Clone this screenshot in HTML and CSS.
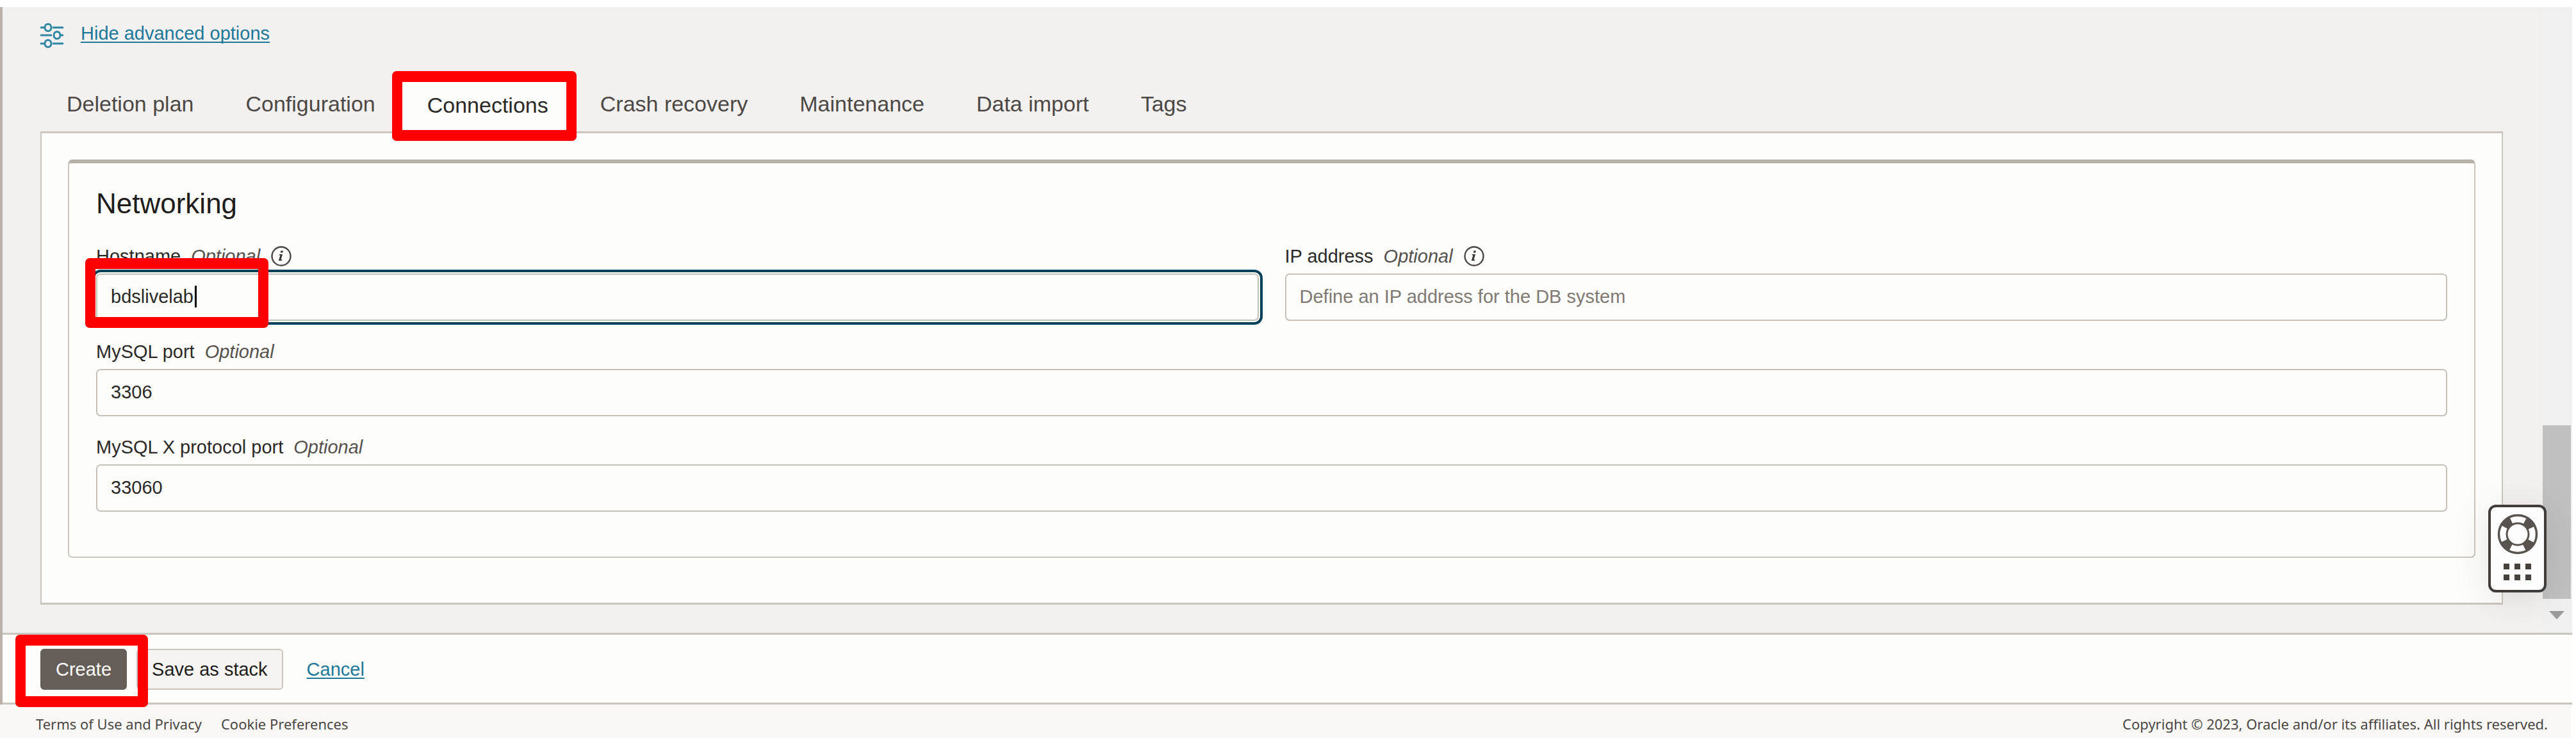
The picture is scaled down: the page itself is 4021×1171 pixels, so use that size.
FILE: index.html
```html
<!DOCTYPE html>
<html lang="en">
<head>
<meta charset="utf-8">
<title>Create DB system</title>
<link rel="stylesheet" href="styles.css">
</head>
<body>
<div class="frame">
  <main class="main">
    <div class="content">
      <div class="advanced">
        <svg class="sliders" viewBox="0 0 36 40" aria-hidden="true">
          <g fill="none" stroke="#2f86a3" stroke-width="3">
            <path d="M0 8H6M19 8H36M0 20H18M32 20H36M0 33H6M19 33H36"/>
            <ellipse cx="12" cy="8" rx="5" ry="5.5"/><ellipse cx="26" cy="20" rx="5" ry="5.5"/><ellipse cx="12" cy="33" rx="5" ry="5.5"/>
          </g>
        </svg>
        <a class="link" href="#">Hide advanced options</a>
      </div>
      <div class="tabs" role="tablist">
        <button class="tab" role="tab">Deletion plan</button>
        <button class="tab" role="tab">Configuration</button>
        <button class="tab tab-active" role="tab" aria-selected="true">Connections<span class="callout callout-tab"></span></button>
        <button class="tab" role="tab">Crash recovery</button>
        <button class="tab" role="tab">Maintenance</button>
        <button class="tab" role="tab">Data import</button>
        <button class="tab" role="tab">Tags</button>
      </div>
      <div class="panel" role="tabpanel">
        <section class="card">
          <h2 class="card-title">Networking</h2>
          <div class="fields">
            <div class="field">
              <div class="label-row">
                <label for="hostname">Hostname</label><em class="optional">Optional</em>
                <svg class="info" viewBox="0 0 32 32" aria-hidden="true"><circle cx="16" cy="16" r="14.5" fill="none" stroke="#4a4744" stroke-width="2.4"/><path fill="#333" d="M15.500 7.500h3.500l-.8 3h-3.500zM13 13h5l-2.500 8.500h2l-.4 1.500h-5.200l2.500-8.500h-1.800z"/></svg>
              </div>
              <div class="control">
                <input class="input input-focused" id="hostname" type="text" value="bdslivelab">
                <span class="caret"></span>
                <span class="callout callout-input"></span>
              </div>
            </div>
            <div class="field">
              <div class="label-row">
                <label for="ip">IP address</label><em class="optional">Optional</em>
                <svg class="info" viewBox="0 0 32 32" aria-hidden="true"><circle cx="16" cy="16" r="14.5" fill="none" stroke="#4a4744" stroke-width="2.4"/><path fill="#333" d="M15.500 7.500h3.500l-.8 3h-3.500zM13 13h5l-2.500 8.500h2l-.4 1.500h-5.200l2.500-8.500h-1.800z"/></svg>
              </div>
              <div class="control"><input class="input" id="ip" type="text" placeholder="Define an IP address for the DB system"></div>
            </div>
            <div class="field field-wide">
              <div class="label-row"><label for="port">MySQL port</label><em class="optional">Optional</em></div>
              <div class="control"><input class="input" id="port" type="text" value="3306"></div>
            </div>
            <div class="field field-wide">
              <div class="label-row"><label for="xport">MySQL X protocol port</label><em class="optional">Optional</em></div>
              <div class="control"><input class="input" id="xport" type="text" value="33060"></div>
            </div>
          </div>
        </section>
      </div>
    </div>
    <div class="scrollbar" aria-hidden="true">
      <div class="thumb"></div>
      <div class="arrow"></div>
    </div>
    <button class="help" aria-label="Help">
      <svg class="help-icon" viewBox="0 0 64 64" aria-hidden="true">
        <circle cx="32" cy="32" r="24" fill="none" stroke="#57534f" stroke-width="14" stroke-dasharray="15 22.700" stroke-dashoffset="-11.350"/>
        <circle cx="32" cy="32" r="29.500" fill="none" stroke="#57534f" stroke-width="3.500"/>
        <circle cx="32" cy="32" r="17" fill="none" stroke="#57534f" stroke-width="3"/>
      </svg>
      <svg class="help-dots" viewBox="0 0 43 26" aria-hidden="true"><path fill="#45413d" d="M0 0h9v9H0zM17 0h9v9h-9zM34 0h9v9h-9zM0 17h9v9H0zM17 17h9v9h-9zM34 17h9v9h-9z"/></svg>
    </button>
  </main>
  <div class="actions">
    <div class="create-wrap">
      <button class="btn btn-primary">Create</button>
      <span class="callout callout-create"></span>
    </div>
    <button class="btn">Save as stack</button>
    <a class="link cancel" href="#">Cancel</a>
  </div>
</div>
<footer class="footer">
  <nav class="footer-links">
    <a href="#">Terms of Use and Privacy</a>
    <a href="#">Cookie Preferences</a>
  </nav>
  <span>Copyright © 2023, Oracle and/or its affiliates. All rights reserved.</span>
</footer>
</body>
</html>
```
FILE: styles.css
```css
* { box-sizing: border-box; }
body {
  margin: 0;
  padding: 11px 6px 0 0;
  background: #fff;
  color: #2b2927;
  font: 29px/34px "Liberation Sans", Arial, sans-serif;
}
button, input { font: inherit; color: inherit; }

.frame { border-left: 4px solid #b9b1aa; background: #fdfdfb; }
.main { position: relative; display: flex; background: #f3f1f0; }
.content { flex: 1; padding: 24px 59px 44px; }

.link { color: #1d7899; text-decoration: underline; text-decoration-thickness: 2px; text-underline-offset: 3px; text-decoration-skip-ink: none; }
.advanced { display: flex; gap: 27px; height: 40px; }
.sliders { width: 36px; height: 40px; }

.tabs { display: flex; align-items: flex-start; margin-top: 44px; }
.tab {
  padding: 23px 40px 23px 41px;
  border: 0;
  background: none;
  color: #4c4845;
  font-size: 34px;
  line-height: 40px;
}
.tab-active {
  position: relative;
  z-index: 1;
  margin-bottom: -3px;
  padding-top: 25px;
  padding-bottom: 24px;
  background: #fdfdfb;
  color: #2b2927;
}

.panel { padding: 41px 41px 70px; border: solid #cbc5c0; border-width: 3px 2px; background: #fdfdfb; }
.card {
  padding: 38px 42px 70px;
  border: 2px solid #cbc5c0;
  border-top: 6px solid #b7b1a9;
  border-radius: 7px;
}
.card-title { margin: 0 0 40px; font-size: 44px; line-height: 50px; font-weight: 400; color: #1f1d1b; }
.fields { display: grid; grid-template-columns: 1fr 1fr; gap: 31px 41px; }
.field { display: flex; flex-direction: column; gap: 10px; }
.field-wide { grid-column: 1 / -1; }
.label-row { display: flex; align-items: center; height: 34px; }
.optional { margin-left: 16px; color: #55514e; }
.info { width: 32px; height: 32px; margin-left: 17px; }
.control { position: relative; display: flex; }
.input {
  width: 100%;
  height: 74px;
  padding: 0 21px 2px;
  border: 2px solid #c6c0bb;
  border-radius: 7px;
  outline: 0;
  background: #fdfdfb;
}
.input::placeholder { color: #807974; opacity: 1; }
.input-focused { outline: 4px solid #06405a; outline-offset: 2px; }
.caret { position: absolute; left: 154px; top: 19px; width: 3px; height: 34px; background: #000; }

.callout {
  position: absolute;
  z-index: 2;
  border: 17px solid #f00;
  border-width: 17px 16px;
  border-radius: 7px;
  pointer-events: none;
}
.callout-tab { left: -14px; top: -8px; right: -4px; bottom: -12px; }
.callout-input { left: -17px; top: -24px; width: 286px; height: 109px; }
.callout-create { left: -39px; top: -22px; right: -33px; bottom: -27px; }

.scrollbar { display: flex; flex-direction: column; align-items: center; justify-content: flex-end; width: 49px; padding: 0 2px 21px 3px; background: #f0f0f0; }
.thumb { width: 44px; height: 271px; background: #c0c0c0; }
.arrow { margin-top: 19px; border: 12px solid transparent; border-top: 13px solid #9b9b9b; border-bottom: 0; }

.help {
  position: absolute;
  right: 40px;
  bottom: 63px;
  display: flex;
  flex-direction: column;
  align-items: center;
  gap: 14px;
  width: 91px;
  padding: 10px 0 15px;
  border: 4px solid #403c39;
  border-radius: 12px;
  background: #fdfdfd;
  box-shadow: 0 8px 60px rgba(0, 0, 0, .1);
}
.help-icon { width: 64px; height: 64px; }
.help-dots { width: 43px; height: 26px; }

.actions { display: flex; align-items: center; gap: 15px; padding: 22px 59px 20px; border: solid #cbc5c0; border-width: 3px 0; }
.create-wrap { position: relative; display: flex; }
.btn { height: 64px; padding: 0 22px; border: 2px solid #cbc5c0; border-radius: 6px; background: #f6f4f3; color: #1f1d1b; }
.btn-primary { border-color: #655d58; background: #655d58; color: #fff; }
.cancel { margin-left: 22px; }

.footer {
  display: flex;
  justify-content: space-between;
  margin-right: 2px;
  padding: 14px 36px 6px 56px;
  background: #faf8f7;
  color: #4a4643;
  font: 22px/32px "Noto Sans", sans-serif;
}
.footer-links { display: flex; gap: 30px; }
.footer a { color: inherit; text-decoration: none; }
```
